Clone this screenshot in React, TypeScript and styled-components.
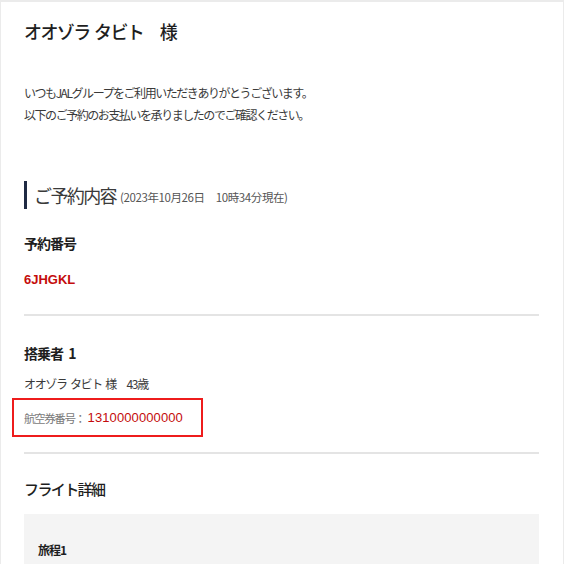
import React from "react";
import styled, { createGlobalStyle } from "styled-components";

const GlobalStyle = createGlobalStyle`
  html, body {
    margin: 0;
    padding: 0;
    background: #ebebeb;
  }
  body {
    font-family: "Noto Sans CJK JP", "Noto Sans", sans-serif;
    color: #333;
  }
`;

const Page = styled.div`
  margin: 2px 1px 0 1px;
  padding: 17px 24px 0 23px;
  background: #fff;
  min-height: 562px;
  box-sizing: border-box;
  overflow: hidden;
`;

const Title = styled.h1`
  margin: 0;
  font-size: 18px;
  line-height: 24px;
  font-weight: 500;
  letter-spacing: -1.6px;
  word-spacing: 2px;
  color: #1e1e1e;
`;

const Greeting = styled.p`
  margin: 39px 0 0;
  font-size: 12px;
  line-height: 22px;
  letter-spacing: -1.45px;
  color: #3a3a3a;
`;

const SectionHeading = styled.div`
  margin-top: 55px;
  height: 28px;
  border-left: 3px solid #1f2a44;
  padding-left: 7px;
  display: flex;
  align-items: center;
  gap: 4px;
`;

const HeadingText = styled.span`
  font-size: 18px;
  letter-spacing: -1.6px;
  color: #3a3a3a;
  font-weight: 400;
`;

const HeadingNote = styled.span`
  font-size: 11.5px;
  letter-spacing: -0.4px;
  color: #555;
  margin-top: 3px;
`;

const Label = styled.div<{ $top: number }>`
  margin-top: ${(p) => p.$top}px;
  font-size: 14px;
  line-height: 20px;
  font-weight: 700;
  letter-spacing: -1px;
  word-spacing: 3px;
  color: #1e1e1e;
`;

const Code = styled.div`
  margin-top: 17px;
  font-family: "Liberation Sans", Arial, sans-serif;
  font-size: 13px;
  line-height: 20px;
  font-weight: 700;
  color: #c40c0c;
`;

const Divider = styled.hr<{ $top: number }>`
  margin: ${(p) => p.$top}px 0 0;
  border: none;
  height: 2px;
  background: #e4e4e4;
`;

const Passenger = styled.div`
  margin-top: 11px;
  font-size: 12px;
  line-height: 20px;
  letter-spacing: -1.35px;
  word-spacing: 2px;
  color: #3a3a3a;
`;

const TicketBox = styled.div`
  margin: 4px 0 0 -12px;
  width: 191px;
  height: 39px;
  box-sizing: border-box;
  border: 2px solid #ee1c1c;
  padding-left: 10px;
  display: flex;
  align-items: center;
`;

const TicketLabel = styled.span`
  font-size: 11.5px;
  letter-spacing: -1.4px;
  color: #7a7a7a;
  margin-right: 3px;
`;

const TicketNumber = styled.span`
  font-family: "Liberation Sans", Arial, sans-serif;
  font-size: 13px;
  color: #c40c0c;
  letter-spacing: 0.1px;
`;

const SubHeading = styled.h2`
  margin: 24px 0 0;
  font-size: 15px;
  line-height: 22px;
  font-weight: 500;
  letter-spacing: -1.6px;
  color: #1e1e1e;
`;

const FlightPanel = styled.div`
  margin-top: 14px;
  background: #f4f4f4;
  padding: 26px 14px 20px;
`;

const TripLabel = styled.div`
  font-size: 12px;
  line-height: 20px;
  font-weight: 700;
  letter-spacing: -1px;
  color: #1e1e1e;
`;

export default function App() {
  return (
    <>
      <GlobalStyle />
      <Page>
        <Title>オオゾラ タビト　様</Title>
        <Greeting>
          いつもJALグループをご利用いただきありがとうございます。
          <br />
          以下のご予約のお支払いを承りましたのでご確認ください。
        </Greeting>
        <SectionHeading>
          <HeadingText>ご予約内容</HeadingText>
          <HeadingNote>(2023年10月26日　10時34分現在)</HeadingNote>
        </SectionHeading>
        <Label $top={24}>予約番号</Label>
        <Code>6JHGKL</Code>
        <Divider $top={24} />
        <Label $top={27}>搭乗者 1</Label>
        <Passenger>オオゾラ タビト 様　43歳</Passenger>
        <TicketBox>
          <TicketLabel>航空券番号：</TicketLabel>
          <TicketNumber>1310000000000</TicketNumber>
        </TicketBox>
        <Divider $top={15} />
        <SubHeading>フライト詳細</SubHeading>
        <FlightPanel>
          <TripLabel>旅程1</TripLabel>
        </FlightPanel>
      </Page>
    </>
  );
}
